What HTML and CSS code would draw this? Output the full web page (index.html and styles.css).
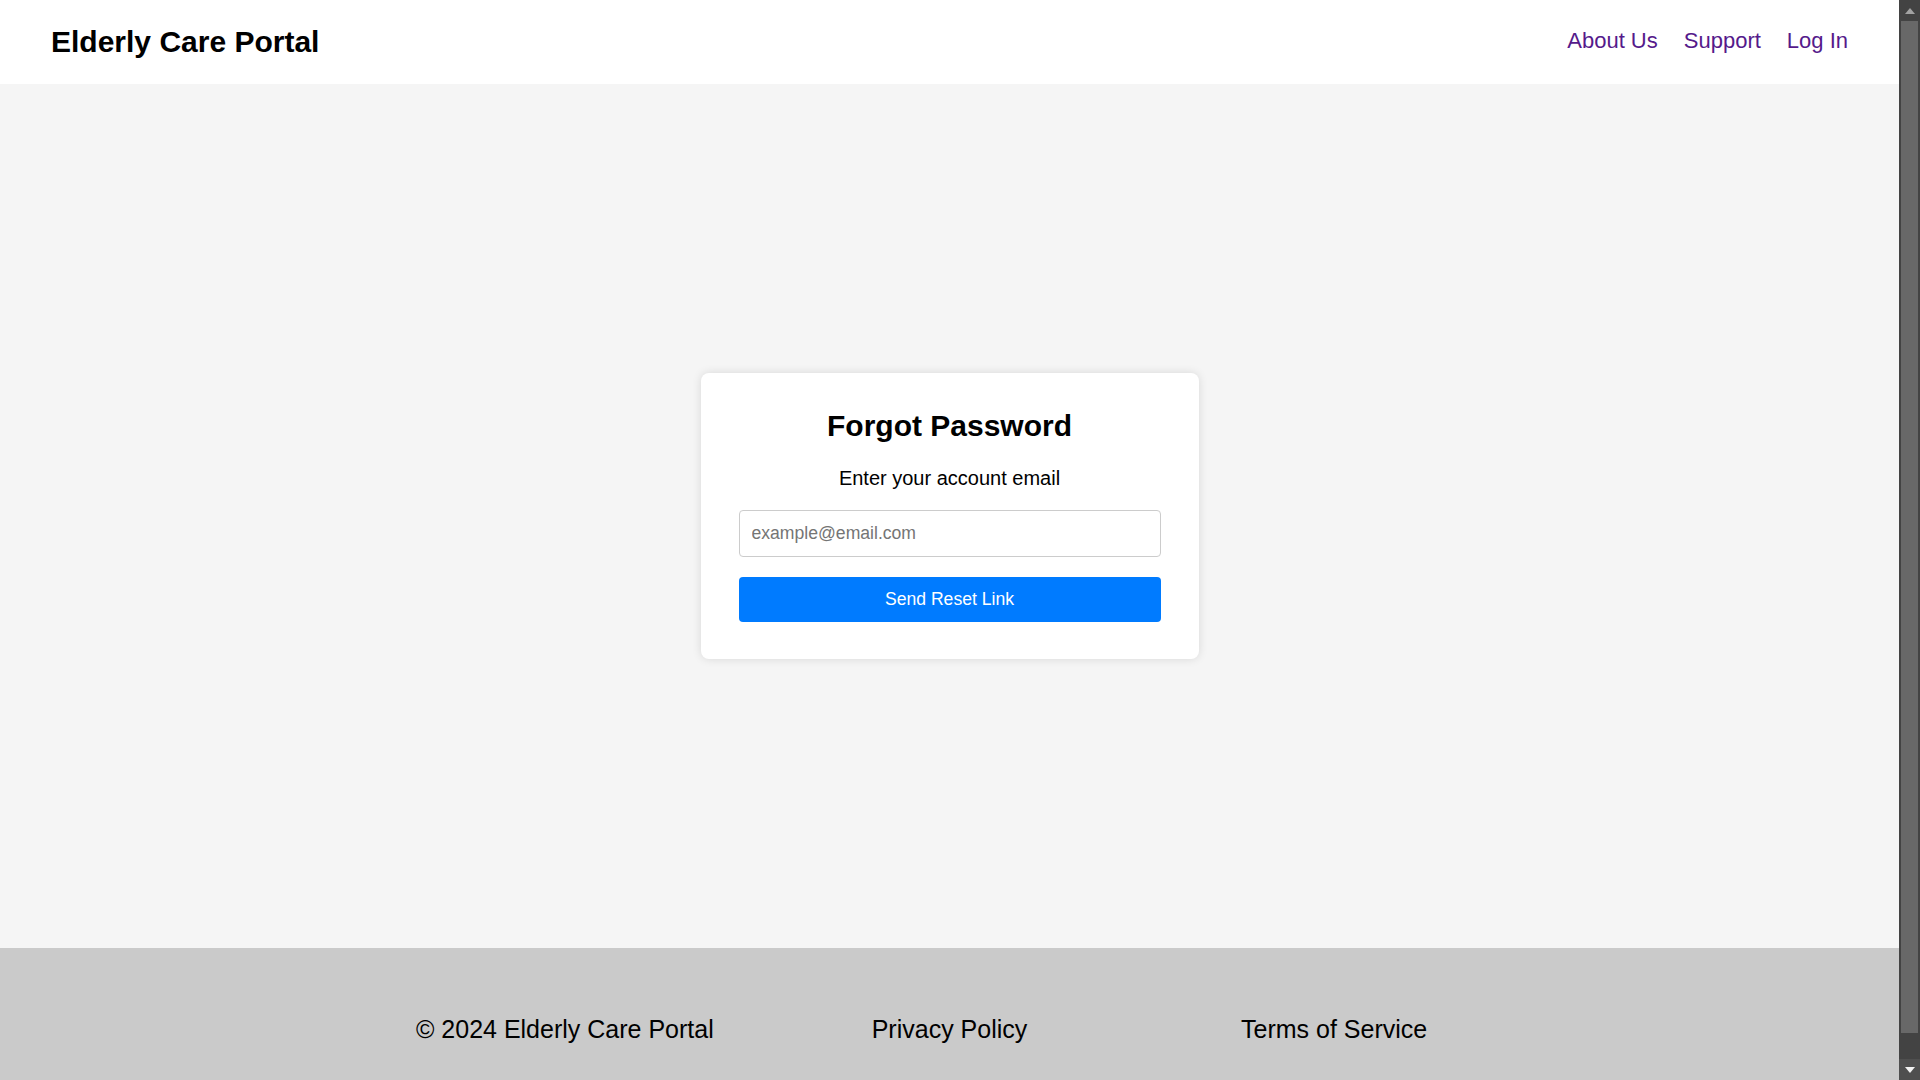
FILE: index.html
```html
<!DOCTYPE html>
<html lang="en">
<head>
<meta charset="utf-8">
<title>Forgot Password - Elderly Care Portal</title>
<link rel="stylesheet" href="styles.css">
</head>
<body>
<div class="page">
  <header class="site-header">
    <div class="brand">Elderly Care Portal</div>
    <nav class="nav">
      <a href="#" class="nav-link">About Us</a>
      <a href="#" class="nav-link">Support</a>
      <a href="#" class="nav-link">Log In</a>
    </nav>
  </header>
  <main class="main">
    <section class="card">
      <h2 class="card-title">Forgot Password</h2>
      <p class="card-text">Enter your account email</p>
      <input class="email-input" type="email" placeholder="example@email.com">
      <button class="submit-btn" type="button">Send Reset Link</button>
    </section>
  </main>
  <footer class="site-footer">
    <div class="footer-inner">
      <div class="footer-item">© 2024 Elderly Care Portal</div>
      <div class="footer-item">Privacy Policy</div>
      <div class="footer-item">Terms of Service</div>
    </div>
  </footer>
</div>
<div class="scrollbar" aria-hidden="true">
  <div class="sb-btn sb-up">
    <svg width="10" height="6" viewBox="0 0 10 6"><polygon points="5,0 10,6 0,6" fill="#a3a3a3"/></svg>
  </div>
  <div class="sb-track">
    <div class="sb-thumb"></div>
  </div>
  <div class="sb-btn sb-down">
    <svg width="10" height="6" viewBox="0 0 10 6"><polygon points="0,0 10,0 5,6" fill="#f2f2f2"/></svg>
  </div>
</div>
</body>
</html>
```

FILE: styles.css
```css
* { box-sizing: border-box; }
html, body { margin: 0; padding: 0; }
body {
  font-family: "Liberation Sans", Arial, sans-serif;
  font-size: 20px;
  color: #000;
  background: #f5f5f5;
}
.page {
  width: calc(100% - 21px);
}
.site-header {
  height: 84px;
  background: #fff;
  display: flex;
  align-items: center;
  justify-content: space-between;
  padding: 0 51px;
}
.brand {
  font-size: 30px;
  font-weight: bold;
}
.nav {
  display: flex;
  gap: 26px;
  padding-bottom: 3px;
}
.nav-link {
  font-size: 22px;
  color: #551a8b;
  text-decoration: none;
}
.main {
  height: 864px;
  display: flex;
  align-items: center;
  justify-content: center;
  background: #f5f5f5;
}
.card {
  width: 498px;
  background: #fff;
  border-radius: 8px;
  box-shadow: 0 0 10px rgba(0, 0, 0, 0.12);
  padding: 36px 38px 37px;
  display: flex;
  flex-direction: column;
  align-items: center;
}
.card-title {
  margin: 0;
  font-size: 30px;
  font-weight: bold;
}
.card-text {
  margin: 24px 0 20px;
  font-size: 20px;
}
.email-input {
  width: 100%;
  height: 47px;
  padding: 0 12px;
  font-family: "Liberation Sans", Arial, sans-serif;
  font-size: 17.6px;
  border: 1px solid #ccc;
  border-radius: 4px;
  background: #fff;
  color: #000;
  outline: none;
}
.email-input::placeholder { color: #757575; }
.submit-btn {
  width: 100%;
  height: 45px;
  margin-top: 20px;
  border: none;
  border-radius: 4px;
  background: #007bff;
  color: #fff;
  font-family: "Liberation Sans", Arial, sans-serif;
  font-size: 17.6px;
  cursor: pointer;
}
.site-footer {
  background: #cacaca;
  padding: 67px 0;
}
.footer-inner {
  width: 1154px;
  margin: 0 auto;
  display: grid;
  grid-template-columns: repeat(3, 1fr);
  text-align: center;
  font-size: 25px;
  line-height: 29px;
}

/* drawn scrollbar overlay */
.scrollbar {
  position: fixed;
  top: 0;
  right: 0;
  width: 21px;
  height: 100vh;
  background: #434343;
  display: flex;
  flex-direction: column;
}
.sb-btn {
  height: 21px;
  flex: none;
  display: flex;
  align-items: center;
  justify-content: center;
}
.sb-down { background: #4f4f4f; }
.sb-track {
  flex: 1;
  padding: 0 2px 26px;
}
.sb-thumb {
  height: 1012px;
  background: #686868;
}
```
